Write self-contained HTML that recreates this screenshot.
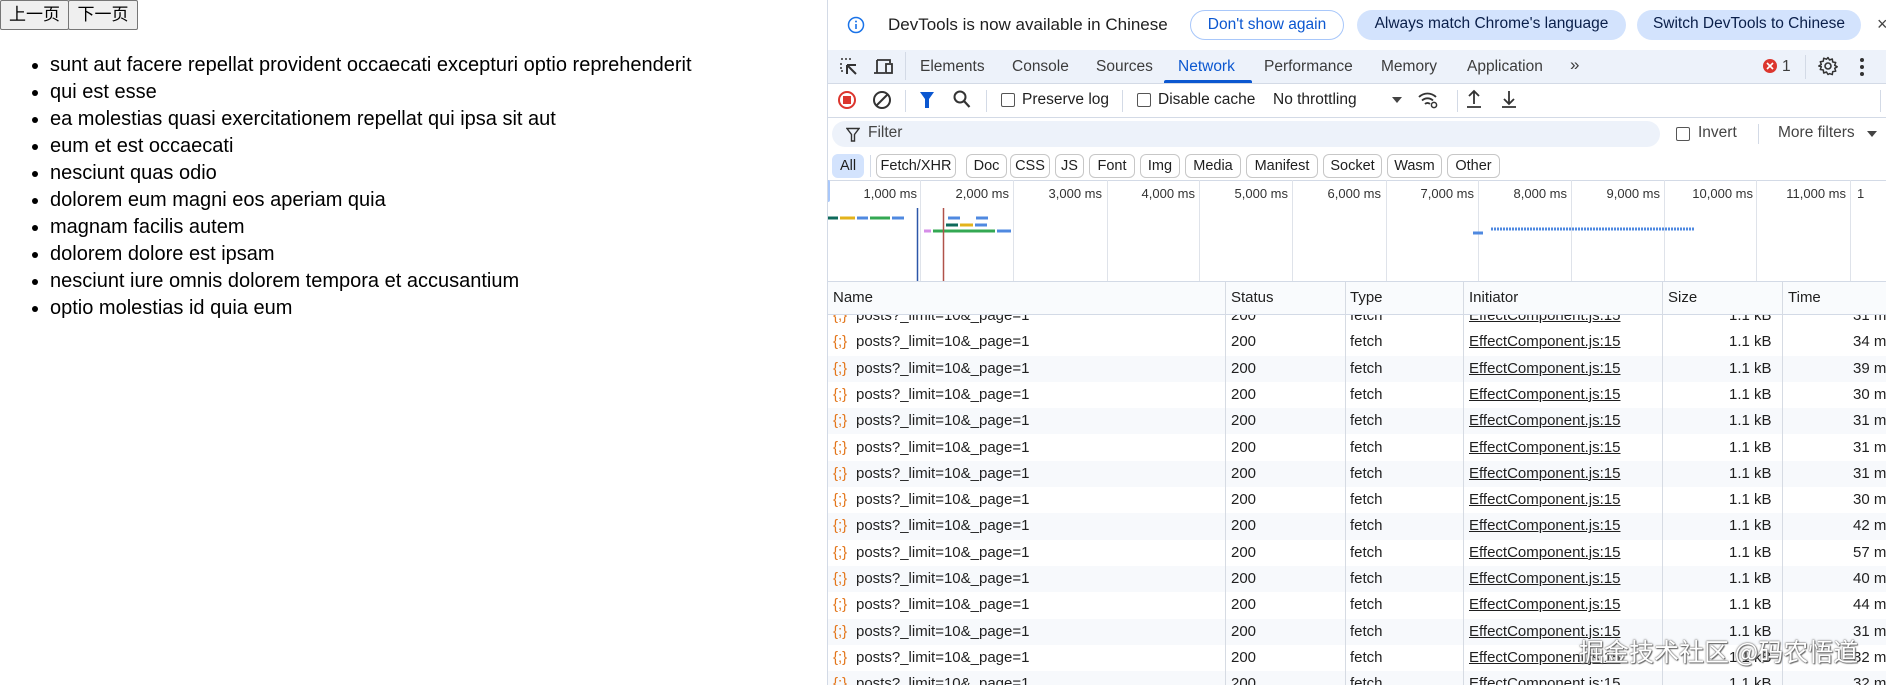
<!DOCTYPE html>
<html><head><meta charset="utf-8"><style>
*{box-sizing:border-box;margin:0;padding:0}
html,body{width:1886px;height:685px;overflow:hidden}
body{background:#fff;font-family:"Liberation Sans","Noto Sans CJK SC",sans-serif;color:#1f1f1f;position:relative}
.a{position:absolute;white-space:nowrap}
.btn{position:absolute;top:0;height:30px;background:#efefef;border:1px solid #767676;border-radius:2px;font-size:17px;line-height:28px;text-align:center;color:#000;font-family:"Liberation Sans","Noto Sans CJK SC",sans-serif}
ul{position:absolute;left:50px;top:52px;font-size:20px;line-height:27px;color:#000;list-style:disc}
#dt{position:absolute;left:827px;top:0;width:1059px;height:685px;background:#fff;font-size:15px;overflow:hidden}
.pill{position:absolute;top:10px;height:30px;border-radius:15px;font-size:15.5px;line-height:28px;text-align:center;white-space:nowrap}
.tab{position:absolute;top:58px;font-size:15.5px;color:#3c3c3c;white-space:nowrap}
.chip{position:absolute;top:154px;height:24px;border:1px solid #c7c7c7;border-radius:6px;font-size:14.5px;line-height:22px;text-align:center;color:#1f1f1f;white-space:nowrap}
.gl{position:absolute;top:180px;width:1px;height:101px;background:#dfe3ea}
.tl{position:absolute;top:186px;font-size:13px;color:#333;text-align:right;width:80px;white-space:nowrap}
.row{position:absolute;left:0;width:1059px;height:26.3px;font-size:15px;line-height:26px;overflow:hidden}
.row span{position:absolute;white-space:nowrap}
.cb{position:absolute;width:14px;height:14px;border:1.5px solid #555;border-radius:2px}
.vs{position:absolute;width:1px;background:#d6dbe3}
</style></head><body>
<div class="btn" style="left:0;width:69px">上一页</div>
<div class="btn" style="left:68px;width:70px">下一页</div>
<ul>
<li>sunt aut facere repellat provident occaecati excepturi optio reprehenderit</li>
<li>qui est esse</li>
<li>ea molestias quasi exercitationem repellat qui ipsa sit aut</li>
<li>eum et est occaecati</li>
<li>nesciunt quas odio</li>
<li>dolorem eum magni eos aperiam quia</li>
<li>magnam facilis autem</li>
<li>dolorem dolore est ipsam</li>
<li>nesciunt iure omnis dolorem tempora et accusantium</li>
<li>optio molestias id quia eum</li>
</ul>

<div id="dt">
<svg class="a" style="left:20px;top:16px" width="18" height="18" viewBox="0 0 18 18"><circle cx="9" cy="9" r="7.5" fill="none" stroke="#1a73e8" stroke-width="1.5"/><rect x="8.2" y="8" width="1.6" height="5" fill="#1a73e8"/><circle cx="9" cy="5.5" r="1" fill="#1a73e8"/></svg>
<div class="a" style="left:61px;top:15px;font-size:17px;color:#1f1f1f">DevTools is now available in Chinese</div>
<div class="pill" style="left:363px;width:154px;border:1px solid #a8c7fa;color:#0b57d0">Don't show again</div>
<div class="pill" style="left:530px;width:269px;background:#d3e3fd;color:#0a1f4a">Always match Chrome's language</div>
<div class="pill" style="left:810px;width:224px;background:#d3e3fd;color:#0a1f4a">Switch DevTools to Chinese</div>
<div class="a" style="left:1050px;top:14px;font-size:18px;color:#444">×</div>

<div class="a" style="left:0;top:50px;width:1059px;height:34px;background:#edf2fa;border-bottom:1px solid #d3dae6"></div>
<svg class="a" style="left:12px;top:57px" width="20" height="20" viewBox="0 0 20 20"><path d="M2 2h2M6 2h2M10 2h2M2 6v2M2 10v2M2 14h2" stroke="#333" stroke-width="1.5" fill="none" stroke-dasharray="2 2"/><path d="M8 8l9 0M8 8l0 9M8 8l9 9" stroke="#333" stroke-width="2" fill="none"/></svg>
<svg class="a" style="left:46px;top:57px" width="22" height="20" viewBox="0 0 22 20"><path d="M4 3h13v3M4 3v13H1M4 16h8" stroke="#333" stroke-width="1.8" fill="none"/><rect x="13" y="7" width="6" height="9" fill="none" stroke="#333" stroke-width="1.8"/></svg>
<div class="a" style="left:78px;top:52px;width:1px;height:28px;background:#d3dae6"></div>
<div class="tab" style="left:93px">Elements</div>
<div class="tab" style="left:185px">Console</div>
<div class="tab" style="left:269px">Sources</div>
<div class="tab" style="left:351px;color:#0b57d0">Network</div>
<div class="a" style="left:337px;top:80px;width:88px;height:3px;background:#0b57d0;border-radius:2px 2px 0 0"></div>
<div class="tab" style="left:437px">Performance</div>
<div class="tab" style="left:554px">Memory</div>
<div class="tab" style="left:640px">Application</div>
<div class="tab" style="left:743px;font-size:17px;top:55px">»</div>
<svg class="a" style="left:935px;top:58px" width="16" height="16" viewBox="0 0 16 16"><circle cx="8" cy="8" r="7" fill="#dc362e"/><path d="M5 5l6 6M11 5l-6 6" stroke="#fff" stroke-width="1.6"/></svg>
<div class="tab" style="left:955px">1</div>
<div class="a" style="left:978px;top:55px;width:1px;height:24px;background:#d3dae6"></div>
<svg class="a" style="left:991px;top:56px" width="20" height="20" viewBox="0 0 20 20"><circle cx="10" cy="10" r="3" fill="none" stroke="#333" stroke-width="1.6"/><path d="M10 1.5l1.5 2.5 2.8-1 .4 3 3 .5-1 2.8 2.5 1.5-2.5 1.5 1 2.8-3 .5-.4 3-2.8-1L10 18.5 8.5 16l-2.8 1-.4-3-3-.5 1-2.8L.8 10l2.5-1.5-1-2.8 3-.5.4-3 2.8 1z" fill="none" stroke="#333" stroke-width="1.5" stroke-linejoin="round"/></svg>
<svg class="a" style="left:1032px;top:57px" width="6" height="20" viewBox="0 0 6 20"><circle cx="3" cy="3" r="2" fill="#333"/><circle cx="3" cy="10" r="2" fill="#333"/><circle cx="3" cy="17" r="2" fill="#333"/></svg>

<svg class="a" style="left:10px;top:90px" width="20" height="20" viewBox="0 0 20 20"><circle cx="10" cy="10" r="8" fill="none" stroke="#dc362e" stroke-width="2"/><rect x="6" y="6" width="8" height="8" fill="#dc362e"/></svg>
<svg class="a" style="left:45px;top:90px" width="20" height="20" viewBox="0 0 20 20"><circle cx="10" cy="10" r="8" fill="none" stroke="#333" stroke-width="2"/><path d="M4.5 15.5l11-11" stroke="#333" stroke-width="2"/></svg>
<div class="a" style="left:78px;top:90px;width:1px;height:22px;background:#d3dae6"></div>
<svg class="a" style="left:92px;top:91px" width="16" height="18" viewBox="0 0 16 18"><path d="M1 1h14l-5 7v9h-4V8z" fill="#0b57d0"/></svg>
<svg class="a" style="left:126px;top:90px" width="18" height="19" viewBox="0 0 18 19"><circle cx="7" cy="7" r="5.5" fill="none" stroke="#333" stroke-width="2"/><path d="M11 11l5.5 6" stroke="#333" stroke-width="2.2"/></svg>
<div class="a" style="left:159px;top:90px;width:1px;height:22px;background:#d3dae6"></div>
<div class="cb" style="left:174px;top:93px"></div>
<div class="a" style="left:195px;top:91px;font-size:15.5px">Preserve log</div>
<div class="a" style="left:295px;top:90px;width:1px;height:22px;background:#d3dae6"></div>
<div class="cb" style="left:310px;top:93px"></div>
<div class="a" style="left:331px;top:91px;font-size:15.5px">Disable cache</div>
<div class="a" style="left:446px;top:91px;font-size:15.5px">No throttling</div>
<svg class="a" style="left:565px;top:97px" width="10" height="7" viewBox="0 0 10 7"><path d="M0 0h10L5 6z" fill="#444"/></svg>
<svg class="a" style="left:590px;top:90px" width="24" height="20" viewBox="0 0 24 20"><path d="M2 7a12 12 0 0 1 17 0M5 10.5a8 8 0 0 1 11 0M8 14a3.5 3.5 0 0 1 5 0" stroke="#333" stroke-width="1.8" fill="none"/><circle cx="17" cy="15" r="2.6" fill="none" stroke="#333" stroke-width="1.5"/></svg>
<div class="a" style="left:630px;top:90px;width:1px;height:22px;background:#d3dae6"></div>
<svg class="a" style="left:638px;top:89px" width="18" height="20" viewBox="0 0 18 20"><path d="M9 15V2M4 7l5-5 5 5M2 18h14" stroke="#333" stroke-width="1.8" fill="none"/></svg>
<svg class="a" style="left:673px;top:89px" width="18" height="20" viewBox="0 0 18 20"><path d="M9 2v13M4 10l5 5 5-5M2 18h14" stroke="#333" stroke-width="1.8" fill="none"/></svg>
<div class="a" style="left:1053px;top:90px;width:1px;height:22px;background:#d3dae6"></div>
<div class="a" style="left:0;top:117px;width:1059px;height:1px;background:#d3dae6"></div>

<div class="a" style="left:5px;top:121px;width:828px;height:26px;background:#edf2fa;border-radius:13px"></div>
<svg class="a" style="left:19px;top:127px" width="14" height="15" viewBox="0 0 14 15"><path d="M1 1.5h12L8.5 7.5V14h-3V7.5z" fill="none" stroke="#333" stroke-width="1.4"/></svg>
<div class="a" style="left:41px;top:124px;font-size:15.5px;color:#444">Filter</div>
<div class="cb" style="left:849px;top:127px"></div>
<div class="a" style="left:871px;top:124px;font-size:15.5px;color:#444">Invert</div>
<div class="a" style="left:931px;top:124px;width:1px;height:20px;background:#d3dae6"></div>
<div class="a" style="left:951px;top:124px;font-size:15.5px;color:#444">More filters</div>
<svg class="a" style="left:1040px;top:131px" width="10" height="7" viewBox="0 0 10 7"><path d="M0 0h10L5 6z" fill="#444"/></svg>

<div class="chip" style="left:5px;width:32px;background:#d3e3fd;border-color:#d3e3fd">All</div>
<div class="a" style="left:43px;top:155px;width:1px;height:22px;background:#d3dae6"></div>
<div class="chip" style="left:49px;width:80px">Fetch/XHR</div>
<div class="chip" style="left:139px;width:41px">Doc</div>
<div class="chip" style="left:183px;width:40px">CSS</div>
<div class="chip" style="left:228px;width:29px">JS</div>
<div class="chip" style="left:262px;width:46px">Font</div>
<div class="chip" style="left:313px;width:40px">Img</div>
<div class="chip" style="left:358px;width:56px">Media</div>
<div class="chip" style="left:419px;width:72px">Manifest</div>
<div class="chip" style="left:496px;width:59px">Socket</div>
<div class="chip" style="left:560px;width:55px">Wasm</div>
<div class="chip" style="left:620px;width:53px">Other</div>

<div class="a" style="left:0;top:180px;width:1059px;height:1px;background:#d3dae6"></div>
<div class="a" style="left:0;top:180px;width:3px;height:22px;background:#a8c7fa;border-radius:0 2px 2px 0"></div>
<div class="gl" style="left:93px"></div><div class="gl" style="left:186px"></div><div class="gl" style="left:280px"></div><div class="gl" style="left:372px"></div><div class="gl" style="left:465px"></div><div class="gl" style="left:559px"></div><div class="gl" style="left:651px"></div><div class="gl" style="left:744px"></div><div class="gl" style="left:837px"></div><div class="gl" style="left:929px"></div><div class="gl" style="left:1023px"></div>
<div class="tl" style="left:10px">1,000 ms</div><div class="tl" style="left:102px">2,000 ms</div><div class="tl" style="left:195px">3,000 ms</div><div class="tl" style="left:288px">4,000 ms</div><div class="tl" style="left:381px">5,000 ms</div><div class="tl" style="left:474px">6,000 ms</div><div class="tl" style="left:567px">7,000 ms</div><div class="tl" style="left:660px">8,000 ms</div><div class="tl" style="left:753px">9,000 ms</div><div class="tl" style="left:846px">10,000 ms</div><div class="tl" style="left:939px">11,000 ms</div><div class="tl" style="left:1030px;text-align:left">1</div>
<svg class="a" style="left:0;top:180px" width="1059" height="102">
<g stroke-width="3">
<line x1="0" y1="38" x2="11" y2="38" stroke="#0e6a5b"/><line x1="13" y1="38" x2="28" y2="38" stroke="#e3b31b"/><line x1="30" y1="38" x2="41" y2="38" stroke="#4f89e0"/><line x1="43" y1="38" x2="63" y2="38" stroke="#34a853"/><line x1="65" y1="38" x2="77" y2="38" stroke="#4f89e0"/>
<line x1="121" y1="38" x2="133" y2="38" stroke="#4f89e0"/><line x1="149" y1="38" x2="161" y2="38" stroke="#4f89e0"/>
<line x1="119" y1="45" x2="131" y2="45" stroke="#0e6a5b"/><line x1="133" y1="45" x2="146" y2="45" stroke="#e3b31b"/><line x1="148" y1="45" x2="160" y2="45" stroke="#4f89e0"/>
<line x1="97" y1="51" x2="104" y2="51" stroke="#d68ee8"/><line x1="106" y1="51" x2="168" y2="51" stroke="#34a853"/><line x1="170" y1="51" x2="184" y2="51" stroke="#4f89e0"/>
<line x1="646" y1="53" x2="656" y2="53" stroke="#4f89e0"/>
<line x1="664" y1="49" x2="868" y2="49" stroke="#4f89e0" stroke-dasharray="2 1"/>
</g>
<line x1="90.5" y1="28" x2="90.5" y2="102" stroke="#2c56a8" stroke-width="1.5"/>
<line x1="116.5" y1="28" x2="116.5" y2="102" stroke="#b0524a" stroke-width="1.5"/>
</svg>

<div class="row" style="top:303px"><span style="left:6px;color:#e3761b">{;}</span><span style="left:29px">posts?_limit=10&amp;_page=1</span><span style="left:404px">200</span><span style="left:523px">fetch</span><span style="left:642px;text-decoration:underline">EffectComponent.js:15</span><span style="left:902px">1.1 kB</span><span style="left:1026px">31 ms</span></div>
<div class="row" style="top:329.3px"><span style="left:6px;color:#e3761b">{;}</span><span style="left:29px">posts?_limit=10&amp;_page=1</span><span style="left:404px">200</span><span style="left:523px">fetch</span><span style="left:642px;text-decoration:underline">EffectComponent.js:15</span><span style="left:902px">1.1 kB</span><span style="left:1026px">34 ms</span></div>
<div class="row" style="top:355.6px;background:#f7f9fc"><span style="left:6px;color:#e3761b">{;}</span><span style="left:29px">posts?_limit=10&amp;_page=1</span><span style="left:404px">200</span><span style="left:523px">fetch</span><span style="left:642px;text-decoration:underline">EffectComponent.js:15</span><span style="left:902px">1.1 kB</span><span style="left:1026px">39 ms</span></div>
<div class="row" style="top:381.9px"><span style="left:6px;color:#e3761b">{;}</span><span style="left:29px">posts?_limit=10&amp;_page=1</span><span style="left:404px">200</span><span style="left:523px">fetch</span><span style="left:642px;text-decoration:underline">EffectComponent.js:15</span><span style="left:902px">1.1 kB</span><span style="left:1026px">30 ms</span></div>
<div class="row" style="top:408.2px;background:#f7f9fc"><span style="left:6px;color:#e3761b">{;}</span><span style="left:29px">posts?_limit=10&amp;_page=1</span><span style="left:404px">200</span><span style="left:523px">fetch</span><span style="left:642px;text-decoration:underline">EffectComponent.js:15</span><span style="left:902px">1.1 kB</span><span style="left:1026px">31 ms</span></div>
<div class="row" style="top:434.5px"><span style="left:6px;color:#e3761b">{;}</span><span style="left:29px">posts?_limit=10&amp;_page=1</span><span style="left:404px">200</span><span style="left:523px">fetch</span><span style="left:642px;text-decoration:underline">EffectComponent.js:15</span><span style="left:902px">1.1 kB</span><span style="left:1026px">31 ms</span></div>
<div class="row" style="top:460.8px;background:#f7f9fc"><span style="left:6px;color:#e3761b">{;}</span><span style="left:29px">posts?_limit=10&amp;_page=1</span><span style="left:404px">200</span><span style="left:523px">fetch</span><span style="left:642px;text-decoration:underline">EffectComponent.js:15</span><span style="left:902px">1.1 kB</span><span style="left:1026px">31 ms</span></div>
<div class="row" style="top:487.1px"><span style="left:6px;color:#e3761b">{;}</span><span style="left:29px">posts?_limit=10&amp;_page=1</span><span style="left:404px">200</span><span style="left:523px">fetch</span><span style="left:642px;text-decoration:underline">EffectComponent.js:15</span><span style="left:902px">1.1 kB</span><span style="left:1026px">30 ms</span></div>
<div class="row" style="top:513.4px;background:#f7f9fc"><span style="left:6px;color:#e3761b">{;}</span><span style="left:29px">posts?_limit=10&amp;_page=1</span><span style="left:404px">200</span><span style="left:523px">fetch</span><span style="left:642px;text-decoration:underline">EffectComponent.js:15</span><span style="left:902px">1.1 kB</span><span style="left:1026px">42 ms</span></div>
<div class="row" style="top:539.7px"><span style="left:6px;color:#e3761b">{;}</span><span style="left:29px">posts?_limit=10&amp;_page=1</span><span style="left:404px">200</span><span style="left:523px">fetch</span><span style="left:642px;text-decoration:underline">EffectComponent.js:15</span><span style="left:902px">1.1 kB</span><span style="left:1026px">57 ms</span></div>
<div class="row" style="top:566px;background:#f7f9fc"><span style="left:6px;color:#e3761b">{;}</span><span style="left:29px">posts?_limit=10&amp;_page=1</span><span style="left:404px">200</span><span style="left:523px">fetch</span><span style="left:642px;text-decoration:underline">EffectComponent.js:15</span><span style="left:902px">1.1 kB</span><span style="left:1026px">40 ms</span></div>
<div class="row" style="top:592.3px"><span style="left:6px;color:#e3761b">{;}</span><span style="left:29px">posts?_limit=10&amp;_page=1</span><span style="left:404px">200</span><span style="left:523px">fetch</span><span style="left:642px;text-decoration:underline">EffectComponent.js:15</span><span style="left:902px">1.1 kB</span><span style="left:1026px">44 ms</span></div>
<div class="row" style="top:618.6px;background:#f7f9fc"><span style="left:6px;color:#e3761b">{;}</span><span style="left:29px">posts?_limit=10&amp;_page=1</span><span style="left:404px">200</span><span style="left:523px">fetch</span><span style="left:642px;text-decoration:underline">EffectComponent.js:15</span><span style="left:902px">1.1 kB</span><span style="left:1026px">31 ms</span></div>
<div class="row" style="top:644.9px"><span style="left:6px;color:#e3761b">{;}</span><span style="left:29px">posts?_limit=10&amp;_page=1</span><span style="left:404px">200</span><span style="left:523px">fetch</span><span style="left:642px;text-decoration:underline">EffectComponent.js:15</span><span style="left:902px">1.1 kB</span><span style="left:1026px">32 ms</span></div>
<div class="row" style="top:671.2px;height:13.8px;background:#f7f9fc"><span style="left:6px;color:#e3761b">{;}</span><span style="left:29px">posts?_limit=10&amp;_page=1</span><span style="left:404px">200</span><span style="left:523px">fetch</span><span style="left:642px;text-decoration:underline">EffectComponent.js:15</span><span style="left:902px">1.1 kB</span><span style="left:1026px">32 ms</span></div>

<div class="vs" style="left:398px;top:282px;height:403px"></div>
<div class="vs" style="left:518px;top:282px;height:403px"></div>
<div class="vs" style="left:636px;top:282px;height:403px"></div>
<div class="vs" style="left:835px;top:282px;height:403px"></div>
<div class="vs" style="left:955px;top:282px;height:403px"></div>

<div class="a" style="left:0;top:281px;width:1059px;height:34px;background:#f9fbfd;border-top:1px solid #d3dae6;border-bottom:1px solid #d3dae6"></div>
<div class="vs" style="left:398px;top:282px;height:33px"></div><div class="vs" style="left:518px;top:282px;height:33px"></div><div class="vs" style="left:636px;top:282px;height:33px"></div><div class="vs" style="left:835px;top:282px;height:33px"></div><div class="vs" style="left:955px;top:282px;height:33px"></div>
<div class="a" style="left:6px;top:289px;font-size:15px">Name</div>
<div class="a" style="left:404px;top:289px;font-size:15px">Status</div>
<div class="a" style="left:523px;top:289px;font-size:15px">Type</div>
<div class="a" style="left:642px;top:289px;font-size:15px">Initiator</div>
<div class="a" style="left:841px;top:289px;font-size:15px">Size</div>
<div class="a" style="left:961px;top:289px;font-size:15px">Time</div>

<div class="a" style="left:752px;top:634px;font-size:25px;line-height:34px;color:#fff;font-family:'Noto Sans CJK SC',sans-serif;text-shadow:0 0 1px #555,0 0 2px #777,1px 1px 1px #666">掘金技术社区 @码农悟道</div>
</div>
<div class="a" style="left:827px;top:0;width:1px;height:685px;background:#d3dae6"></div>
</body></html>
